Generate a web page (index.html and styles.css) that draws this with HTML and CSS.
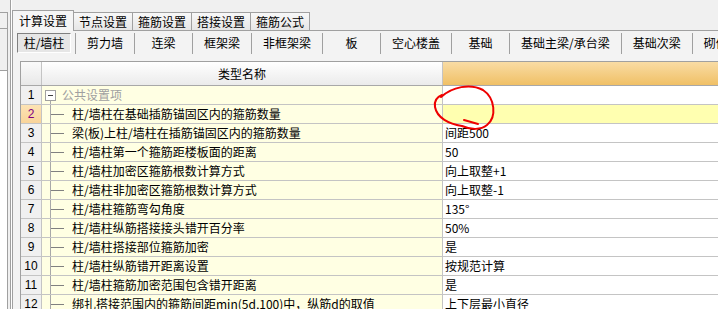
FILE: index.html
```html
<!DOCTYPE html>
<html lang="zh-CN">
<head>
    <meta charset="UTF-8">
    <title>计算设置</title>
    <link rel="stylesheet" href="styles.css">
</head>
<body>
    <div class="app">
        <!-- 左侧栏（被截断） -->
        <div class="side">
            <div class="side-tab"></div>
            <div class="side-box"></div>
            <div class="side-list"></div>
        </div>
        <div class="split"></div>

        <div class="main">
            <!-- 顶部页签 -->
            <div class="tabs">
                <div class="tab active">计算设置</div>
                <div class="tab">节点设置</div>
                <div class="tab">箍筋设置</div>
                <div class="tab">搭接设置</div>
                <div class="tab">箍筋公式</div>
            </div>

            <div class="panel">
                <!-- 构件类型 -->
                <div class="subtabs">
                    <div class="sub first"><span class="sel">柱/墙柱</span></div>
                    <div class="sub">剪力墙</div>
                    <div class="sub">连梁</div>
                    <div class="sub">框架梁</div>
                    <div class="sub">非框架梁</div>
                    <div class="sub">板</div>
                    <div class="sub">空心楼盖</div>
                    <div class="sub">基础</div>
                    <div class="sub">基础主梁/承台梁</div>
                    <div class="sub">基础次梁</div>
                    <div class="sub">砌体结构</div>
                </div>

                <!-- 设置表格 -->
                <div class="grid">
                    <div class="row head">
                        <div class="num"></div>
                        <div class="name">类型名称</div>
                        <div class="val"></div>
                    </div>
                    <div class="row">
                        <div class="num">1</div>
                        <div class="name root"><span class="toggle"></span>公共设置项</div>
                        <div class="val"></div>
                    </div>
                    <div class="row current">
                        <div class="num">2</div>
                        <div class="name">柱/墙柱在基础插筋锚固区内的箍筋数量</div>
                        <div class="val"></div>
                    </div>
                    <div class="row">
                        <div class="num">3</div>
                        <div class="name">梁(板)上柱/墙柱在插筋锚固区内的箍筋数量</div>
                        <div class="val">间距500</div>
                    </div>
                    <div class="row">
                        <div class="num">4</div>
                        <div class="name">柱/墙柱第一个箍筋距楼板面的距离</div>
                        <div class="val">50</div>
                    </div>
                    <div class="row">
                        <div class="num">5</div>
                        <div class="name">柱/墙柱加密区箍筋根数计算方式</div>
                        <div class="val">向上取整+1</div>
                    </div>
                    <div class="row">
                        <div class="num">6</div>
                        <div class="name">柱/墙柱非加密区箍筋根数计算方式</div>
                        <div class="val">向上取整-1</div>
                    </div>
                    <div class="row">
                        <div class="num">7</div>
                        <div class="name">柱/墙柱箍筋弯勾角度</div>
                        <div class="val">135°</div>
                    </div>
                    <div class="row">
                        <div class="num">8</div>
                        <div class="name">柱/墙柱纵筋搭接接头错开百分率</div>
                        <div class="val">50%</div>
                    </div>
                    <div class="row">
                        <div class="num">9</div>
                        <div class="name">柱/墙柱搭接部位箍筋加密</div>
                        <div class="val">是</div>
                    </div>
                    <div class="row">
                        <div class="num">10</div>
                        <div class="name">柱/墙柱纵筋错开距离设置</div>
                        <div class="val">按规范计算</div>
                    </div>
                    <div class="row">
                        <div class="num">11</div>
                        <div class="name">柱/墙柱箍筋加密范围包含错开距离</div>
                        <div class="val">是</div>
                    </div>
                    <div class="row">
                        <div class="num">12</div>
                        <div class="name">绑扎搭接范围内的箍筋间距min(5d,100)中，纵筋d的取值</div>
                        <div class="val">上下层最小直径</div>
                    </div>
                </div>
            </div>
        </div>
    </div>

    <!-- 红色手绘圈注 -->
    <svg class="mark" width="718" height="309" viewBox="0 0 718 309">
        <path d="M441 97 C452 87 470 83 483 90 C495 98 497 117 487 125 C481 130 471 130 462 126 C449 124 437 118 435 107 C434 101 437 97 442 95"
              fill="none" stroke="#ee0000" stroke-width="2" stroke-linecap="round"/>
        <path d="M464 120 L478 124" fill="none" stroke="#ee0000" stroke-width="2" stroke-linecap="round"/>
    </svg>
</body>
</html>
```

FILE: styles.css
```css
/* Reset */
* {
    margin: 0;
    padding: 0;
    box-sizing: border-box;
}

body {
    position: relative;
    width: 718px;
    height: 309px;
    overflow: hidden;
    background: #f0f0f0;
    font-family: "Noto Sans CJK SC", "Liberation Sans", sans-serif;
    font-size: 12px;
    color: #000;
}

.app {
    display: flex;
    height: 309px;
}

/* 左侧栏 */
.side {
    width: 8px;
    padding-top: 12px;
    display: flex;
    flex-direction: column;
}

.side-tab {
    height: 16px;
    border-top: 1px solid #a0a0a0;
    border-right: 1px solid #a0a0a0;
}

.side-box {
    height: 43px;
    border: 1px solid #a0a0a0;
    border-left: none;
}

.side-list {
    flex: 1;
    background: #fff;
    border-right: 1px solid #a0a0a0;
}

.split {
    width: 4px;
    background: linear-gradient(to right, transparent 2px, #a0a0a0 2px, #a0a0a0 3px, #fff 3px);
}

.main {
    flex: 1;
    min-width: 0;
    display: flex;
    flex-direction: column;
}

/* 顶部页签 */
.tabs {
    height: 30px;
    display: flex;
    align-items: flex-end;
    position: relative;
    z-index: 1;
}

.tab {
    height: 18px;
    line-height: 17px;
    padding: 0 5px;
    border: 1px solid #a0a0a0;
    border-left: none;
    border-bottom: none;
    background: linear-gradient(#f8f8f8, #e6e6e6);
    white-space: nowrap;
}

.tab.active {
    height: 21px;
    line-height: 20px;
    padding: 0 6px;
    margin-bottom: -1px;
    border-left: 1px solid #a0a0a0;
    background: #f5f5f5;
}

.panel {
    flex: 1;
    border-top: 1px solid #a0a0a0;
    border-left: 1px solid #a0a0a0;
    background: #f3f3f3;
    overflow: hidden;
}

/* 构件类型 */
.subtabs {
    height: 26px;
    display: flex;
    padding: 2px 0 0 4px;
    white-space: nowrap;
}

.sub {
    flex-shrink: 0;
    height: 21px;
    line-height: 20px;
    min-width: 58px;
    padding: 0 11px;
    text-align: center;
    border-right: 1px solid #a0a0a0;
}

.sub.first {
    min-width: 0;
    padding: 0 4px 0 0;
}

.sel {
    display: block;
    width: 54px;
    height: 20px;
    line-height: 18px;
    border: 1px solid;
    border-color: #808080 #fff #fff #808080;
    background: #e6e6e6;
}

/* 设置表格 */
.grid {
    width: 720px;
    margin: 4px 0 0 7px;
    border-top: 1px solid #a0a0a0;
    border-left: 1px solid #a0a0a0;
}

.row {
    display: flex;
    height: 19px;
    border-bottom: 1px solid #c4c4c4;
}

.num {
    width: 21px;
    flex-shrink: 0;
    border-right: 1px solid #c4c4c4;
    background: #f0f0f0;
    text-align: center;
    line-height: 18px;
    font-family: "Liberation Sans", sans-serif;
}

.name {
    position: relative;
    width: 401px;
    flex-shrink: 0;
    padding-left: 30px;
    border-right: 1px solid #c4c4c4;
    background: #ffffe3;
    line-height: 18px;
    white-space: nowrap;
    overflow: hidden;
}

.name::before {
    content: "";
    position: absolute;
    left: 8px;
    top: 0;
    bottom: 0;
    border-left: 1px solid #a8a8a8;
}

.name::after {
    content: "";
    position: absolute;
    left: 9px;
    top: 9px;
    width: 13px;
    border-top: 1px solid #808080;
}

.name.root {
    padding-left: 20px;
    color: #a0a0a0;
}

.name.root::before {
    top: 9px;
}

.name.root::after {
    display: none;
}

.toggle {
    position: absolute;
    left: 3px;
    top: 4px;
    width: 11px;
    height: 11px;
    border: 1px solid #a0a0a0;
    background: #fff;
    z-index: 1;
}

.toggle::after {
    content: "";
    position: absolute;
    left: 2px;
    top: 4px;
    width: 5px;
    border-top: 1px solid #404040;
}

.val {
    flex: 1;
    padding-left: 2px;
    background: #fff;
    line-height: 18px;
    white-space: nowrap;
}

.row.current .num {
    background: linear-gradient(#fde3b4, #f9d49a);
    color: #800080;
}

.row.current .val {
    background: #ffffb0;
}

.head {
    height: 24px;
    border-bottom-color: #a8a8a8;
}

.head .num {
    background: linear-gradient(#fafafa, #e8e8e8);
}

.head .name {
    padding-left: 0;
    text-align: center;
    line-height: 23px;
    background: linear-gradient(#ffffff, #ebebeb);
}

.head .name::before,
.head .name::after {
    display: none;
}

.head .val {
    background: linear-gradient(#f9dca4, #f0c066);
}

/* 圈注 */
.mark {
    position: absolute;
    left: 0;
    top: 0;
    pointer-events: none;
}
```
